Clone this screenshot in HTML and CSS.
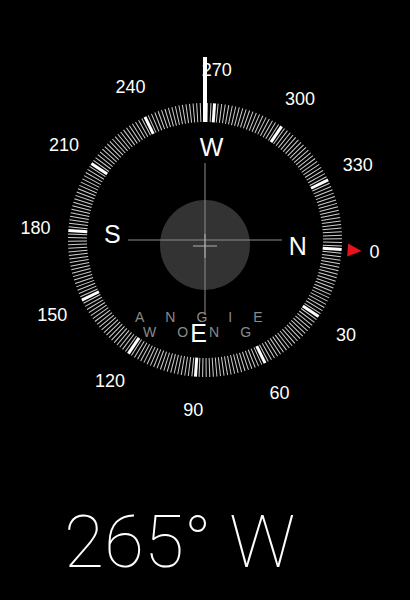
FILE: index.html
```html
<!DOCTYPE html>
<html lang="en">
<head>
  <meta charset="UTF-8" />
  <meta name="viewport" content="width=device-width, initial-scale=1.0" />
  <title>Compass</title>
  <link rel="stylesheet" href="styles.css">
</head>
<body>

  <main class="compass">
    <svg class="dial" width="410" height="470" viewBox="0 0 410 470">
      <circle class="level" cx="205" cy="245" r="45" />
      <g id="ticks"></g>
      <g id="labels"></g>

      <line class="cross" x1="128" y1="240" x2="282" y2="240" />
      <line class="cross" x1="205" y1="163" x2="205" y2="315" />
      <line class="cross-small" x1="193" y1="246" x2="217" y2="246" />
      <line class="cross-small" x1="205" y1="234" x2="205" y2="258" />

      <text class="signature" x="135" y="322">ANGIE</text>
      <text class="signature" x="143" y="337">WONG</text>

      <g id="points"></g>
      <rect class="pointer" x="203" y="57" width="4" height="65" />
    </svg>

    <div class="heading">265° W</div>
  </main>

  <script>
    const NS = 'http://www.w3.org/2000/svg';
    const cx = 205, cy = 240;
    const rotation = 266; // dial turned so the heading sits under the pointer

    function make(tag, attrs, text) {
      const node = document.createElementNS(NS, tag);
      for (const key in attrs) node.setAttribute(key, attrs[key]);
      if (text) node.textContent = text;
      return node;
    }

    function spot(bearing, radius) {
      const a = (bearing - rotation) * Math.PI / 180;
      return { x: cx + radius * Math.sin(a), y: cy - radius * Math.cos(a) };
    }

    const ticks = document.getElementById('ticks');
    for (let i = 0; i < 240; i++) {
      const deg = i * 1.5;
      ticks.appendChild(make('line', {
        x1: cx, y1: cy - 118, x2: cx, y2: cy - 137,
        class: deg % 30 === 0 ? 'tick major' : 'tick',
        transform: `rotate(${deg - rotation} ${cx} ${cy})`
      }));
    }

    ticks.appendChild(make('polygon', {
      points: `${cx - 6.5},${cy - 143} ${cx + 6.5},${cy - 143} ${cx},${cy - 157}`,
      class: 'north',
      transform: `rotate(${-rotation} ${cx} ${cy})`
    }));

    const labels = document.getElementById('labels');
    for (let b = 0; b < 360; b += 30) {
      const p = spot(b, 170);
      labels.appendChild(make('text', { x: p.x, y: p.y, class: 'degree' }, String(b)));
    }

    const points = document.getElementById('points');
    [['N', 0], ['E', 90], ['S', 180], ['W', 270]].forEach(([name, b]) => {
      const p = spot(b, 93);
      points.appendChild(make('text', { x: p.x, y: p.y, class: 'cardinal' }, name));
    });
  </script>

</body>
</html>
```

FILE: styles.css
```css
body {
  margin: 0;
  background: #000;
  color: #fff;
  font-family: "Liberation Sans", Arial, sans-serif;
}

.compass {
  width: 410px;
  height: 600px;
  overflow: hidden;
}

.dial {
  display: block;
}

.level {
  fill: #333;
}

.tick {
  stroke: #cfcfcf;
  stroke-width: 1;
}

.tick.major {
  stroke: #fff;
  stroke-width: 3;
}

.north {
  fill: #e5131b;
}

.degree {
  fill: #fff;
  font-size: 18px;
  text-anchor: middle;
  dominant-baseline: central;
}

.cardinal {
  fill: #fff;
  font-size: 25px;
  text-anchor: middle;
  dominant-baseline: central;
}

.cross {
  stroke: #8c8c8c;
  stroke-width: 1;
}

.cross-small {
  stroke: #b0b0b0;
  stroke-width: 1;
}

.signature {
  fill: #8a8a8a;
  font-size: 14px;
  letter-spacing: 21px;
}

.pointer {
  fill: #fff;
}

.heading {
  font-family: Roboto, "Liberation Sans", sans-serif;
  font-weight: 100;
  font-size: 73px;
  line-height: 1;
  padding: 36px 0 0 64px;
}
```
